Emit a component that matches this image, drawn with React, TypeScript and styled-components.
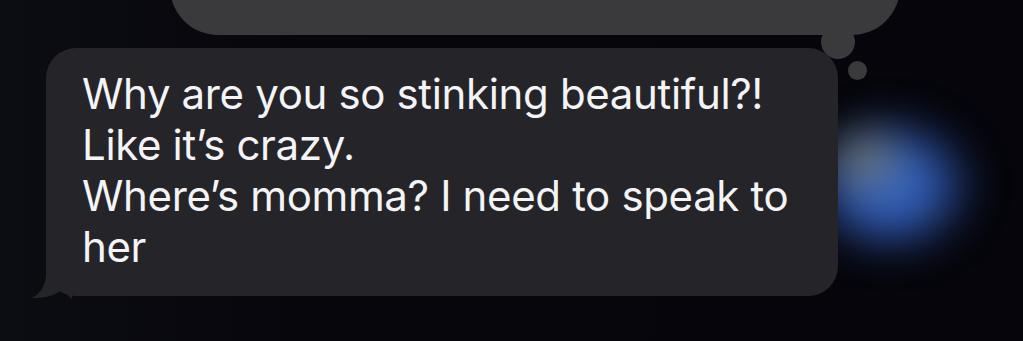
import styled, { createGlobalStyle } from "styled-components";

const GlobalStyle = createGlobalStyle`
  html, body {
    margin: 0;
    padding: 0;
    background: #06060c;
  }
`;

const Screen = styled.div`
  position: relative;
  width: 1023px;
  height: 341px;
  overflow: hidden;
  background: linear-gradient(90deg, #0c0c13 0%, #06060c 30%, #05050b 100%);
  font-family: Inter, "Liberation Sans", sans-serif;
`;

// blurred light behind the bubble, right side
const Glow = styled.div`
  position: absolute;
  left: 790px;
  top: 90px;
  width: 210px;
  height: 170px;
  background:
    radial-gradient(ellipse 50px 45px at 75px 70px, rgba(125, 125, 105, 0.8), transparent 100%),
    radial-gradient(ellipse 95px 80px at 100px 95px, rgba(50, 95, 185, 1) 35%, rgba(38, 68, 140, 0.55) 70%, transparent 100%);
  filter: blur(16px);
`;

const Thread = styled.div`
  position: relative;
  display: flex;
  flex-direction: column;
  align-items: flex-start;
  padding-left: 46px;
`;

const PrevBubble = styled.div`
  position: relative;
  margin-top: -65px;
  margin-left: 124px;
  width: 730px;
  height: 100px;
  border-radius: 48px;
  background: #3a3a3c;

  &::before {
    content: "";
    position: absolute;
    left: 651px;
    top: 90px;
    width: 34px;
    height: 34px;
    border-radius: 50%;
    background: #3a3a3c;
  }

  &::after {
    content: "";
    position: absolute;
    left: 678px;
    top: 126px;
    width: 19px;
    height: 19px;
    border-radius: 50%;
    background: #3a3a3c;
  }
`;

const Bubble = styled.div`
  position: relative;
  box-sizing: border-box;
  margin-top: 13px;
  width: 792px;
  height: 248px;
  padding: 20px 30px 0 36px;
  border-radius: 30px;
  background: #252529;
  color: #f4f4f6;
  font-size: 42px;
  line-height: 51px;
  letter-spacing: -0.35px;
`;

const Tail = styled.svg`
  position: absolute;
  left: -14px;
  bottom: -3px;
`;

export default function App() {
  return (
    <Screen>
      <GlobalStyle />
      <Glow />
      <Thread>
        <PrevBubble />
        <Bubble>
          <Tail width="44" height="44" viewBox="0 0 44 44">
            <path
              d="M14 0 L14 20 Q13 36 0 43 Q18 44 30 35 L40 44 L44 0 Z"
              fill="#252529"
            />
          </Tail>
          Why are you so stinking beautiful?!
          <br />
          Like it’s crazy.
          <br />
          Where’s momma? I need to speak to
          <br />
          her
        </Bubble>
      </Thread>
    </Screen>
  );
}
